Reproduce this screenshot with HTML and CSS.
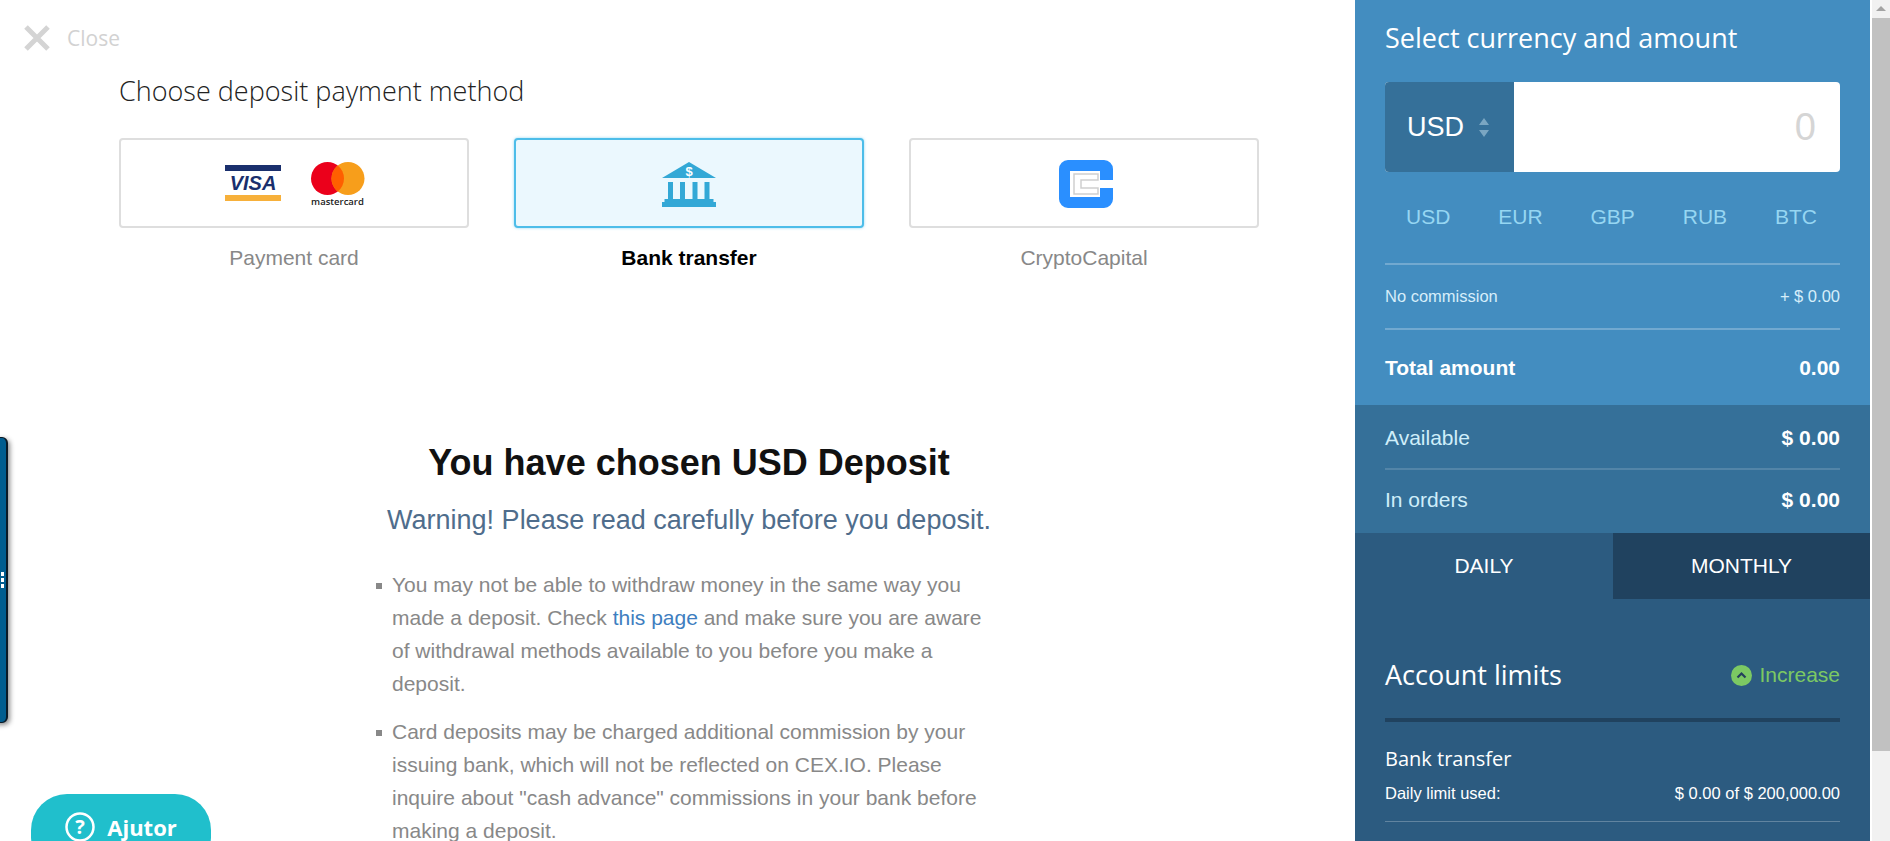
FILE: index.html
```html
<!DOCTYPE html>
<html lang="en">
<head>
    <meta charset="UTF-8">
    <meta name="viewport" content="width=device-width, initial-scale=1.0">
    <title>Deposit</title>
    <link rel="stylesheet" href="styles.css">
</head>
<body>
    <div class="page">
        <main class="main">
            <div class="close-row">
                <svg class="close-icon" width="28" height="28" viewBox="0 0 28 28"><path d="M3 3 L25 25 M25 3 L3 25" stroke="#d4d4d4" stroke-width="5" fill="none"/></svg>
                <span class="close-text">Close</span>
            </div>

            <h2 class="choose-title">Choose deposit payment method</h2>

            <div class="methods">
                <div class="method">
                    <div class="method-box">
                        <svg class="visa" width="56" height="36" viewBox="0 0 56 36">
                            <rect x="0" y="0" width="56" height="6" fill="#1a2f6d"/>
                            <text x="28" y="25" class="visa-text" text-anchor="middle">VISA</text>
                            <rect x="0" y="30" width="56" height="6" fill="#f7b03a"/>
                        </svg>
                        <div class="mc">
                            <svg width="54" height="33" viewBox="0 0 54 33">
                                <circle cx="16.500" cy="16.500" r="16.500" fill="#eb001b"/>
                                <circle cx="37" cy="16.500" r="16.500" fill="#f79e1b"/>
                                <path d="M26.750 3.570 A16.500 16.500 0 0 1 26.750 29.430 A16.500 16.500 0 0 1 26.750 3.570z" fill="#ff5f00"/>
                            </svg>
                            <span class="mc-text">mastercard</span>
                        </div>
                    </div>
                    <div class="method-label">Payment card</div>
                </div>
                <div class="method active">
                    <div class="method-box">
                        <svg class="bank-icon" width="54" height="45" viewBox="0 0 54 45">
                            <path d="M27 0 L54 16 L0 16 Z" fill="#33a8d6"/>
                            <text x="27" y="14" class="bank-dollar" text-anchor="middle">$</text>
                            <rect x="6" y="20" width="5" height="17" fill="#33a8d6"/>
                            <rect x="18" y="20" width="5" height="17" fill="#33a8d6"/>
                            <rect x="30.500" y="20" width="5" height="17" fill="#33a8d6"/>
                            <rect x="42.500" y="20" width="5" height="17" fill="#33a8d6"/>
                            <rect x="2.500" y="37" width="49" height="3.500" fill="#33a8d6"/>
                            <rect x="0" y="40" width="54" height="5" fill="#33a8d6"/>
                        </svg>
                    </div>
                    <div class="method-label">Bank transfer</div>
                </div>
                <div class="method">
                    <div class="method-box">
                        <svg class="cc-icon" width="54" height="48" viewBox="0 0 54 48">
                            <path d="M9 0 H45 a9 9 0 0 1 9 9 V20 H41 V11 H11 V37 H41 V28 H54 V39 a9 9 0 0 1 -9 9 H9 a9 9 0 0 1 -9 -9 V9 a9 9 0 0 1 9 -9z" fill="#2a8fff"/>
                            <path d="M15 14 H39 V20 H22 V28 H39 V34 H15 Z" fill="none" stroke="#cfcfcf" stroke-width="1.500"/>
                        </svg>
                    </div>
                    <div class="method-label">CryptoCapital</div>
                </div>
            </div>

            <section class="notice">
                <h1>You have chosen USD Deposit</h1>
                <p class="warning">Warning! Please read carefully before you deposit.</p>
                <ul class="notice-list">
                    <li>You may not be able to withdraw money in the same way you made a deposit. Check <a href="#">this page</a> and make sure you are aware of withdrawal methods available to you before you make a deposit.</li>
                    <li>Card deposits may be charged additional commission by your issuing bank, which will not be reflected on CEX.IO. Please inquire about "cash advance" commissions in your bank before making a deposit.</li>
                </ul>
            </section>
        </main>

        <aside class="panel">
            <div class="panel-top">
                <h3 class="panel-title">Select currency and amount</h3>
                <div class="amount-box">
                    <div class="currency-select">
                        <span>USD</span>
                        <svg width="10" height="19" viewBox="0 0 10 19"><path d="M5 0 L10 7 H0 Z M5 19 L10 12 H0 Z" fill="#7aa6c2"/></svg>
                    </div>
                    <div class="amount-value">0</div>
                </div>
                <div class="currency-list">
                    <span>USD</span><span>EUR</span><span>GBP</span><span>RUB</span><span>BTC</span>
                </div>
                <div class="row commission-row"><span>No commission</span><span>+ $ 0.00</span></div>
                <div class="row total-row"><span>Total amount</span><span>0.00</span></div>
            </div>

            <div class="balances">
                <div class="row balance-row"><span>Available</span><b>$ 0.00</b></div>
                <div class="row balance-row"><span>In orders</span><b>$ 0.00</b></div>
            </div>

            <div class="tabs">
                <div class="tab">DAILY</div>
                <div class="tab tab-dark">MONTHLY</div>
            </div>

            <div class="limits">
                <div class="limits-head">
                    <h3 class="panel-title">Account limits</h3>
                    <div class="increase">
                        <svg width="21" height="21" viewBox="0 0 21 21"><circle cx="10.500" cy="10.500" r="10.500" fill="#7cc963"/><path d="M6.500 12.500 L10.500 8.500 L14.500 12.500" fill="none" stroke="#24405c" stroke-width="2.200"/></svg>
                        <span>Increase</span>
                    </div>
                </div>
                <div class="limit-name">Bank transfer</div>
                <div class="row limit-row"><span>Daily limit used:</span><span>$ 0.00 of $ 200,000.00</span></div>
            </div>
        </aside>

        <div class="scrollbar">
            <div class="scroll-btn"></div>
            <div class="scroll-thumb"></div>
        </div>
    </div>

    <div class="side-tab"><span></span><span></span><span></span></div>

    <div class="help-btn">
        <svg width="30" height="30" viewBox="0 0 30 30"><circle cx="15" cy="15" r="13.500" fill="none" stroke="#fff" stroke-width="2.500"/><text x="15" y="22" class="help-mark" text-anchor="middle">?</text></svg>
        <span>Ajutor</span>
    </div>
</body>
</html>
```

FILE: styles.css
```css
html, body {
    margin: 0;
    height: 100%;
    overflow: hidden;
    background-color: #fff;
    font-family: "Liberation Sans", Arial, sans-serif;
}
.page {
    display: flex;
    height: 841px;
    overflow: hidden;
}

/* Left column */
.main {
    width: 1355px;
    flex-shrink: 0;
    padding-top: 24px;
    box-sizing: border-box;
}
.close-row {
    display: flex;
    align-items: center;
    height: 27px;
    padding-left: 23px;
}
.close-text {
    margin-left: 16px;
    font-family: "Open Sans", sans-serif;
    font-size: 21px;
    color: #d2d2d2;
}
.choose-title {
    margin: 22px 0 29px 119px;
    font-family: "Open Sans", sans-serif;
    font-weight: 300;
    font-size: 27px;
    line-height: 36px;
    color: #222;
}
.methods {
    display: flex;
    gap: 45px;
    padding-left: 119px;
}
.method {
    width: 350px;
}
.method-box {
    display: flex;
    align-items: center;
    justify-content: center;
    gap: 29px;
    height: 90px;
    box-sizing: border-box;
    border: 2px solid #dedede;
    border-radius: 4px;
    background-color: #fff;
}
.method-label {
    margin-top: 18px;
    text-align: center;
    font-size: 21px;
    line-height: 24px;
    color: #888;
}
.method.active .method-box {
    border-color: #4dbde9;
    background-color: #ebf8fe;
    box-shadow: 0 0 3px rgba(77, 189, 233, 0.6);
}
.method.active .method-label {
    font-weight: bold;
    color: #000;
}
.visa {
    margin-left: 1px;
}
.visa-text {
    font-family: "Liberation Sans", sans-serif;
    font-weight: bold;
    font-style: italic;
    font-size: 20px;
    fill: #1a2f6d;
}
.mc {
    display: flex;
    flex-direction: column;
    align-items: center;
    width: 54px;
    margin: 3px 0 0 1px;
}
.mc-text {
    font-family: "Open Sans", sans-serif;
    font-weight: 600;
    font-size: 9.500px;
    line-height: 10px;
    margin-top: 2px;
    color: #222;
}
.bank-icon {
    margin-top: 2px;
}
.cc-icon {
    margin: 1px 0 0 3px;
}
.bank-dollar {
    font-family: "Liberation Sans", sans-serif;
    font-weight: bold;
    font-size: 13px;
    fill: #fff;
}
.notice {
    width: 594px;
    margin: 171px 0 0 392px;
}
.notice h1 {
    margin: 0 0 0 -100px;
    width: 794px;
    text-align: center;
    font-size: 36px;
    line-height: 44px;
    color: #111;
}
.warning {
    margin: 17px 0 0 -100px;
    width: 794px;
    text-align: center;
    font-size: 27px;
    line-height: 36px;
    color: #4f6d8c;
}
.notice-list {
    list-style: none;
    margin: 30px 0 0;
    padding: 0;
}
.notice-list li {
    position: relative;
    margin-bottom: 15px;
    font-size: 21px;
    line-height: 33px;
    color: #888;
}
.notice-list li::before {
    content: "";
    position: absolute;
    left: -16px;
    top: 15px;
    width: 6px;
    height: 6px;
    background-color: #888;
}
.notice-list a {
    color: #3e7ec0;
    text-decoration: none;
}

/* Right panel */
.panel {
    width: 515px;
    margin-right: 1px;
    flex-shrink: 0;
    color: #fff;
    background-color: #2c5b80;
}
.panel-top {
    padding: 22px 30px 0;
    background-color: #438dc0;
}
.panel-title {
    margin: 0;
    font-family: "Open Sans", sans-serif;
    font-weight: 400;
    font-size: 27px;
    line-height: 32px;
}
.amount-box {
    display: flex;
    height: 90px;
    margin-top: 28px;
    border-radius: 4px;
    overflow: hidden;
    background-color: #fff;
}
.currency-select {
    display: flex;
    align-items: center;
    gap: 15px;
    width: 129px;
    padding-left: 22px;
    box-sizing: border-box;
    font-size: 27px;
    background-color: #357099;
}
.amount-value {
    flex: 1;
    align-self: center;
    padding-right: 24px;
    text-align: right;
    font-size: 38px;
    color: #d5d5d5;
}
.currency-list {
    display: flex;
    justify-content: space-between;
    align-items: center;
    height: 89px;
    padding: 0 23px 2px 21px;
    font-size: 21px;
    color: #96d6f2;
    border-bottom: 2px solid rgba(255, 255, 255, 0.25);
}
.row {
    display: flex;
    justify-content: space-between;
    align-items: center;
}
.commission-row {
    height: 63px;
    font-size: 16.500px;
    color: #d6eefa;
    border-bottom: 2px solid rgba(255, 255, 255, 0.25);
}
.total-row {
    height: 75px;
    font-size: 21px;
    font-weight: bold;
}
.balances {
    padding: 0 30px;
    background-color: #357099;
}
.balance-row {
    font-size: 21px;
    color: #cfeefa;
}
.balance-row:first-child {
    height: 60px;
    padding-top: 3px;
}
.balance-row + .balance-row {
    height: 60px;
    padding-bottom: 3px;
    border-top: 2px solid rgba(255, 255, 255, 0.15);
}
.balance-row b {
    color: #fff;
}
.tabs {
    display: flex;
    height: 66px;
}
.tab {
    display: flex;
    align-items: center;
    justify-content: center;
    width: 258px;
    font-size: 21px;
}
.tab-dark {
    flex: 1;
    background-color: #20425f;
}
.limits {
    padding: 0 30px;
}
.limits-head {
    display: flex;
    justify-content: space-between;
    align-items: center;
    height: 123px;
    box-sizing: border-box;
    padding-top: 34px;
    padding-bottom: 1px;
    border-bottom: 4px solid #20425f;
}
.increase {
    display: flex;
    align-items: center;
    gap: 7px;
    font-size: 21px;
    color: #7cc963;
}
.limit-name {
    margin-top: 24px;
    font-family: "Open Sans", sans-serif;
    font-size: 20px;
    line-height: 26px;
}
.limit-row {
    height: 43px;
    padding-bottom: 6px;
    font-size: 16.500px;
    border-bottom: 1px solid rgba(255, 255, 255, 0.25);
}

/* Scrollbar drawn by hand, screenshot has one */
.scrollbar {
    width: 18px;
    margin-left: 1px;
    flex-shrink: 0;
    background-color: #f1f1f1;
}
.scroll-btn {
    position: relative;
    height: 18px;
}
.scroll-btn::after {
    content: "";
    position: absolute;
    left: 4px;
    top: 6px;
    border-left: 5px solid transparent;
    border-right: 5px solid transparent;
    border-bottom: 5px solid #a3a3a3;
}
.scroll-thumb {
    height: 733px;
    background-color: #c1c1c1;
}

/* Floating things */
.side-tab {
    position: fixed;
    left: -13px;
    top: 437px;
    width: 18px;
    height: 284px;
    border: 1px solid #0a1a26;
    border-right-width: 2px;
    border-radius: 6px;
    background-color: #005d8f;
    box-shadow: 2px 2px 5px rgba(0, 0, 0, 0.45);
    display: flex;
    flex-direction: column;
    align-items: flex-end;
    justify-content: center;
    gap: 2px;
}
.side-tab span {
    width: 3px;
    height: 4px;
    margin-right: 2px;
    background-color: #fff;
}
.help-btn {
    position: fixed;
    left: 31px;
    top: 794px;
    width: 180px;
    height: 80px;
    box-sizing: border-box;
    padding-top: 18px;
    display: flex;
    align-items: flex-start;
    justify-content: center;
    gap: 12px;
    border-radius: 36px;
    background-color: #20bfcc;
    color: #fff;
    font-family: "Open Sans", sans-serif;
    font-weight: 700;
    font-size: 22px;
    line-height: 30px;
}
.help-mark {
    font-family: "Open Sans", sans-serif;
    font-weight: 700;
    font-size: 20px;
    fill: #fff;
}
```
